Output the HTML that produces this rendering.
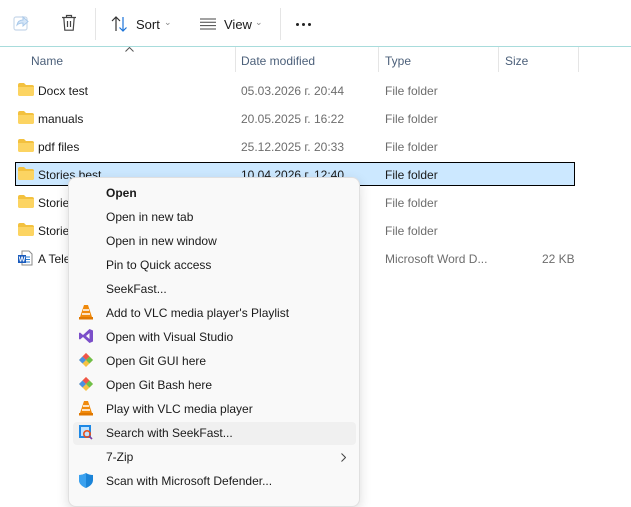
<!DOCTYPE html>
<html><head><meta charset="utf-8"><style>
*{margin:0;padding:0;box-sizing:border-box}
body{width:631px;height:493px;background:#fff;font-family:"Liberation Sans",sans-serif;font-size:12px;color:#1a1a1a;position:relative;overflow:hidden}
.a{position:absolute;white-space:nowrap}
.t{margin-top:1px}
.g{color:#6d6d6d}
.sep{position:absolute;width:1px;background:#e5e5e5}
.menu{position:absolute;left:68px;top:177px;width:292px;height:330px;background:#f9f9f9;border:1px solid #e0e0e0;border-radius:8px;box-shadow:0 4px 12px rgba(0,0,0,.14)}
.mi{position:absolute;left:37px;font-size:12px;color:#1a1a1a}
.dot{position:absolute;width:3px;height:3px;border-radius:50%;background:#222;top:23px}
</style></head><body>
<svg class="a" style="left:13px;top:14px" width="16" height="18" viewBox="0 0 16 18"><rect x="1" y="3" width="13" height="13" rx="2" fill="none" stroke="#c8d8ea" stroke-width="1.2"/><path d="M4 11 Q5 6 10 6 L10 3 L15 7.5 L10 12 L10 9 Q6 9 4 11Z" fill="#d5e6f8" stroke="#a9c9ea" stroke-width="1"/></svg>
<svg class="a" style="left:61px;top:14px" width="16" height="18" viewBox="0 0 16 18"><path d="M1 3.5H15M5.5 3.5V1.5H10.5V3.5M2.8 3.5L3.8 16.2H12.2L13.2 3.5M6.5 7V13M9.5 7V13" fill="none" stroke="#444" stroke-width="1.2"/></svg>
<div class="sep" style="left:95px;top:8px;height:32px"></div>
<svg class="a" style="left:111px;top:15px" width="18" height="18" viewBox="0 0 18 18"><path d="M5 16V2M1 6L5 2L9 6" fill="none" stroke="#333" stroke-width="1.2"/><path d="M12 2V16M8.5 12.5L12 16L15.5 12.5" fill="none" stroke="#1a73d9" stroke-width="1.2"/></svg>
<div class="a" style="left:136px;top:17px;font-size:13px">Sort</div>
<div class="a" style="left:164px;top:17px;font-size:9px;color:#888">⌄</div>
<svg class="a" style="left:200px;top:18px" width="16" height="12" viewBox="0 0 16 12"><path d="M0 1H16M0 4.3H16M0 7.6H16M0 11H16" stroke="#444" stroke-width="1"/></svg>
<div class="a" style="left:224px;top:17px;font-size:13px">View</div>
<div class="a" style="left:255px;top:17px;font-size:9px;color:#888">⌄</div>
<div class="sep" style="left:280px;top:8px;height:32px"></div>
<div class="dot" style="left:296px"></div><div class="dot" style="left:302px"></div><div class="dot" style="left:308px"></div>
<div class="a" style="left:0;top:46px;width:631px;height:1px;background:#a8dcdc"></div>
<svg class="a" style="left:125px;top:47px" width="9" height="5" viewBox="0 0 9 5"><path d="M0.5 4.5L4.5 0.5L8.5 4.5" fill="none" stroke="#555" stroke-width="1"/></svg>
<div class="a t" style="left:31px;top:53px;color:#4c607a">Name</div>
<div class="a t" style="left:241px;top:53px;color:#4c607a">Date modified</div>
<div class="a t" style="left:385px;top:53px;color:#4c607a">Type</div>
<div class="a t" style="left:505px;top:53px;color:#4c607a">Size</div>
<div class="sep" style="left:235px;top:47px;height:25px"></div>
<div class="sep" style="left:378px;top:47px;height:25px"></div>
<div class="sep" style="left:498px;top:47px;height:25px"></div>
<div class="sep" style="left:578px;top:47px;height:25px"></div>
<div class="a" style="left:15px;top:162px;width:560px;height:24px;background:#cce8ff;border:1px solid #000"></div>
<svg width="0" height="0" style="position:absolute"><defs><g id="f"><path d="M0 2 Q0 0 2 0 H6 L8 2 H14 Q16 2 16 4 V11 Q16 13 14 13 H2 Q0 13 0 11Z" fill="#f3c13f"/><path d="M0 4 H16 V11 Q16 13 14 13 H2 Q0 13 0 11Z" fill="#fcd462"/></g></defs></svg>
<svg class="a" style="left:18px;top:83px" width="16" height="13"><use href="#f"/></svg>
<svg class="a" style="left:18px;top:111px" width="16" height="13"><use href="#f"/></svg>
<svg class="a" style="left:18px;top:139px" width="16" height="13"><use href="#f"/></svg>
<svg class="a" style="left:18px;top:167px" width="16" height="13"><use href="#f"/></svg>
<svg class="a" style="left:18px;top:195px" width="16" height="13"><use href="#f"/></svg>
<svg class="a" style="left:18px;top:223px" width="16" height="13"><use href="#f"/></svg>
<svg class="a" style="left:17px;top:250px" width="16" height="16" viewBox="0 0 16 16"><path d="M5 1H12L15 4V15H5Z" fill="#fff" stroke="#8a8a8a"/><path d="M8 7H13M8 9.5H13M8 12H13" stroke="#2b7cd3"/><rect x="1" y="5" width="8" height="8" fill="#185abd"/><text x="5" y="11.5" font-size="7" fill="#fff" text-anchor="middle" font-family="Liberation Sans" font-weight="bold">W</text></svg>
<div class="a t" style="left:38px;top:83px">Docx test</div>
<div class="a t" style="left:38px;top:111px">manuals</div>
<div class="a t" style="left:38px;top:139px">pdf files</div>
<div class="a t" style="left:38px;top:167px">Stories best</div>
<div class="a t" style="left:38px;top:195px">Stories</div>
<div class="a t" style="left:38px;top:223px">Stories</div>
<div class="a t" style="left:38px;top:251px">A Telegram</div>
<div class="a g t" style="left:241px;top:83px">05.03.2026 г. 20:44</div>
<div class="a g t" style="left:241px;top:111px">20.05.2025 г. 16:22</div>
<div class="a g t" style="left:241px;top:139px">25.12.2025 г. 20:33</div>
<div class="a t" style="left:241px;top:167px">10.04.2026 г. 12:40</div>
<div class="a g t" style="left:385px;top:83px">File folder</div>
<div class="a g t" style="left:385px;top:111px">File folder</div>
<div class="a g t" style="left:385px;top:139px">File folder</div>
<div class="a t" style="left:385px;top:167px">File folder</div>
<div class="a g t" style="left:385px;top:195px">File folder</div>
<div class="a g t" style="left:385px;top:223px">File folder</div>
<div class="a g t" style="left:385px;top:251px">Microsoft Word D...</div>
<div class="a g t" style="left:542px;top:251px">22 KB</div>
<div class="menu">
<div class="a" style="left:4px;top:244px;width:283px;height:23px;background:#f0f0f0;border-radius:4px"></div>
<div class="mi" style="top:8px;font-weight:bold">Open</div>
<div class="mi" style="top:32px">Open in new tab</div>
<div class="mi" style="top:56px">Open in new window</div>
<div class="mi" style="top:80px">Pin to Quick access</div>
<div class="mi" style="top:104px">SeekFast...</div>
<div class="mi" style="top:128px">Add to VLC media player's Playlist</div>
<div class="mi" style="top:152px">Open with Visual Studio</div>
<div class="mi" style="top:176px">Open Git GUI here</div>
<div class="mi" style="top:200px">Open Git Bash here</div>
<div class="mi" style="top:224px">Play with VLC media player</div>
<div class="mi" style="top:248px">Search with SeekFast...</div>
<div class="mi" style="top:272px">7-Zip</div>
<div class="mi" style="top:296px">Scan with Microsoft Defender...</div>
<svg class="a" style="left:272px;top:275px" width="5" height="9" viewBox="0 0 5 9"><path d="M0.5 0.5L4.5 4.5L0.5 8.5" fill="none" stroke="#444" stroke-width="1"/></svg>
<svg class="a" style="left:9px;top:126px" width="16" height="16" viewBox="0 0 16 16"><path d="M6 1H10L14 13H2Z" fill="#f08a0c"/><path d="M5 6H11M4 10H12" stroke="#fff" stroke-width="1.5"/><rect x="1" y="13" width="14" height="2.5" fill="#e07800"/></svg>
<svg class="a" style="left:9px;top:150px" width="16" height="16" viewBox="0 0 16 16"><path d="M11.5 1L15 2.5V13.5L11.5 15L5 9L2 11.5L1 11V5L2 4.5L5 7L11.5 1ZM11.5 5L8 8L11.5 11Z" fill="#7b4fc9"/></svg>
<svg class="a" style="left:9px;top:174px" width="16" height="16" viewBox="0 0 16 16"><path d="M8 1L15 8L8 15L1 8Z" fill="#f6c244"/><path d="M8 1L4.5 4.5L8 8L11.5 4.5Z" fill="#f0554a"/><path d="M1 8L4.5 4.5L8 8L4.5 11.5Z" fill="#4a90e2"/><path d="M15 8L11.5 11.5L8 8L11.5 4.5Z" fill="#6cc04a"/></svg>
<svg class="a" style="left:9px;top:198px" width="16" height="16" viewBox="0 0 16 16"><path d="M8 1L15 8L8 15L1 8Z" fill="#f6c244"/><path d="M8 1L4.5 4.5L8 8L11.5 4.5Z" fill="#f0554a"/><path d="M1 8L4.5 4.5L8 8L4.5 11.5Z" fill="#4a90e2"/><path d="M15 8L11.5 11.5L8 8L11.5 4.5Z" fill="#6cc04a"/></svg>
<svg class="a" style="left:9px;top:222px" width="16" height="16" viewBox="0 0 16 16"><path d="M6 1H10L14 13H2Z" fill="#f08a0c"/><path d="M5 6H11M4 10H12" stroke="#fff" stroke-width="1.5"/><rect x="1" y="13" width="14" height="2.5" fill="#e07800"/></svg>
<svg class="a" style="left:9px;top:246px" width="16" height="16" viewBox="0 0 16 16"><rect x="1" y="1" width="12" height="13" fill="#1e88e5"/><rect x="3" y="3" width="8" height="9" fill="#bfe3ff"/><circle cx="9" cy="10" r="3.2" fill="none" stroke="#e8501c" stroke-width="1.6"/><path d="M11.3 12.3L14 15" stroke="#7b3fa0" stroke-width="1.6"/></svg>
<svg class="a" style="left:9px;top:294px" width="16" height="17" viewBox="0 0 16 17"><path d="M8 1Q11 3 15 3V8Q15 13 8 16Q1 13 1 8V3Q5 3 8 1Z" fill="#1b84d8"/><path d="M8 1V16Q1 13 1 8V3Q5 3 8 1Z" fill="#3aa1ef"/></svg>
</div>
</body></html>
